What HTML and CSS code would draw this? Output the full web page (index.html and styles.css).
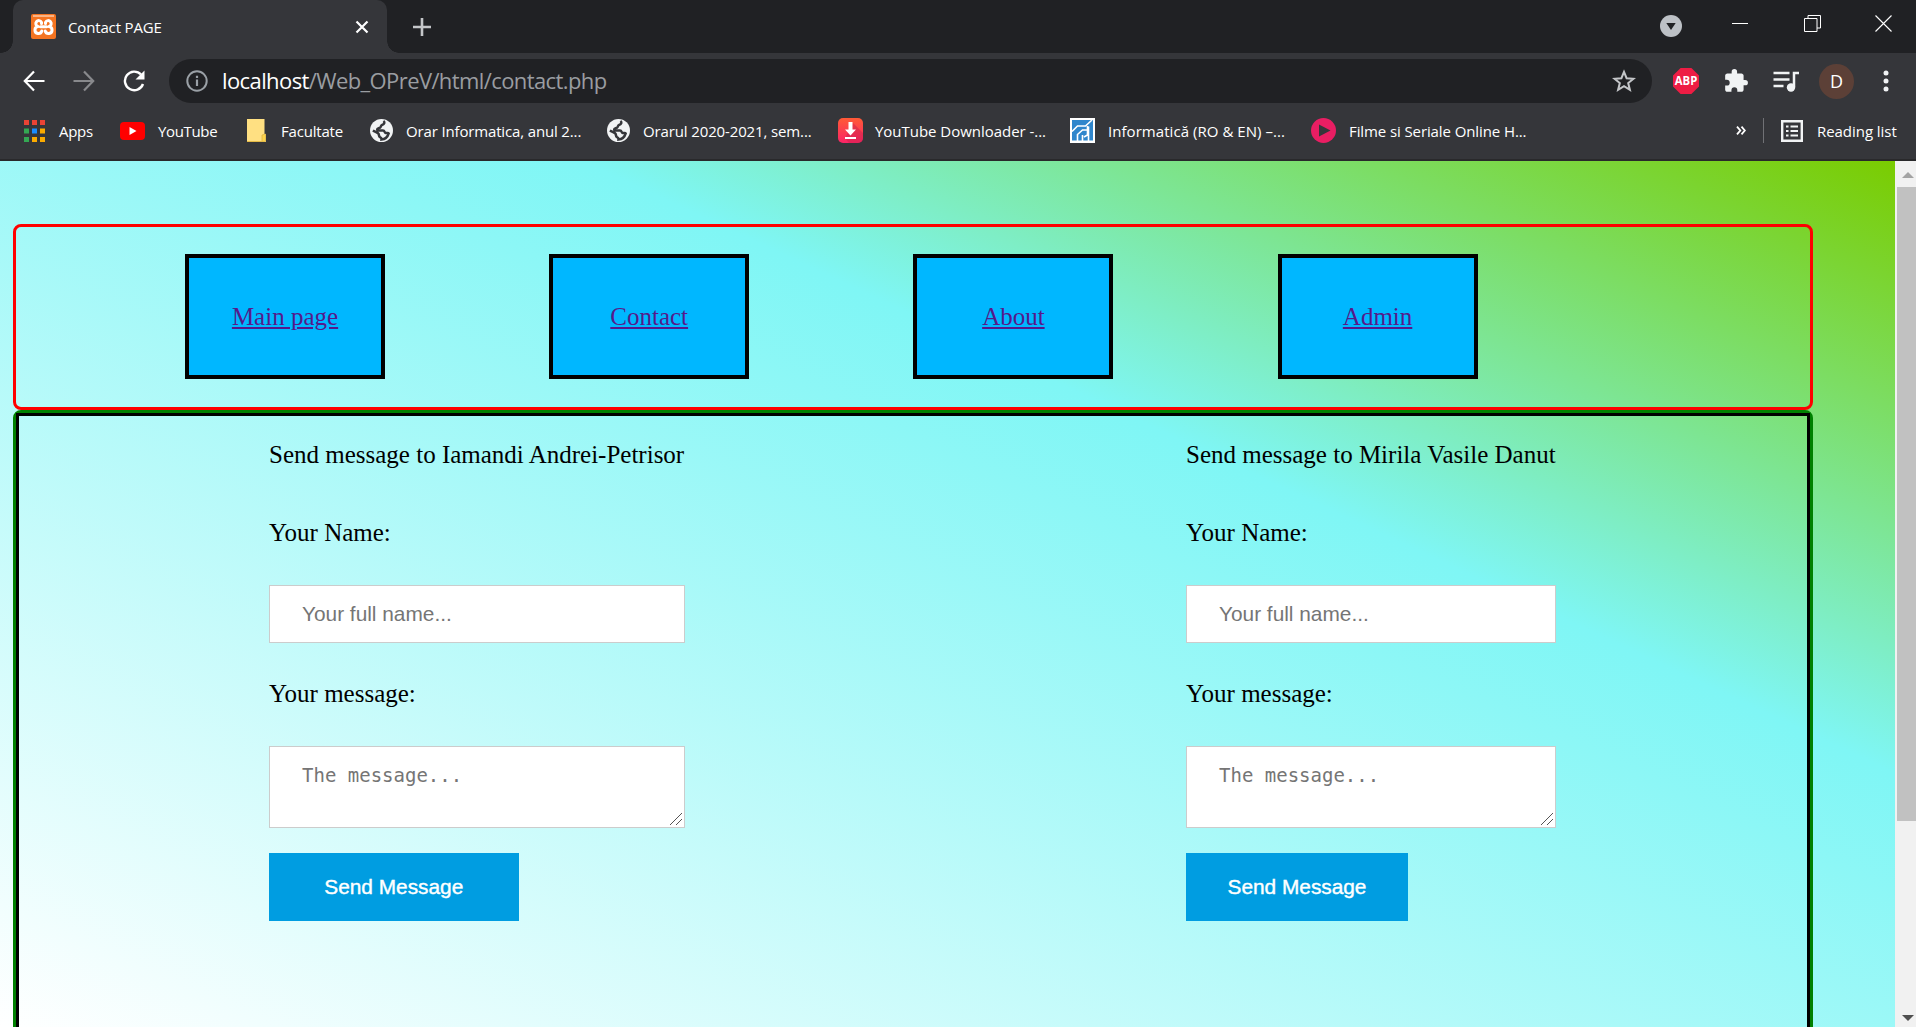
FILE: index.html
```html
<!DOCTYPE html>
<html lang="en">
<head>
<meta charset="utf-8">
<title>Contact PAGE</title>
<link rel="stylesheet" href="styles.css">
</head>
<body>
<div class="window">
  <header class="tabstrip">
    <div class="tab">
      <svg class="favicon" width="25" height="25" viewBox="0 0 25 25"><rect width="25" height="25" rx="2" fill="#f47421"/><rect x="2" y="1" width="21" height="2" fill="#f9b384"/><path d="M10.500 9.500V8.300A3 3 0 1 0 7 12.500a3.500 3.500 0 1 0 3.800 4.500M14.500 9.500V8.300a3 3 0 1 1 3.500 4.200 3.500 3.500 0 1 1-3.800 4.500M9.500 12.700h6" fill="none" stroke="#fff" stroke-width="3" stroke-linejoin="round" stroke-linecap="round"/></svg>
      <span class="tab-title">Contact PAGE</span>
      <svg class="tab-close" width="14" height="14" viewBox="0 0 14 14"><path d="M1.500 1.500l11 11M12.500 1.500l-11 11" stroke="#fff" stroke-width="2.200"/></svg>
    </div>
    <svg class="new-tab" width="20" height="20" viewBox="0 0 20 20"><path d="M10 1v18M1 10h18" stroke="#c4c6c9" stroke-width="2.600"/></svg>
    <div class="window-controls">
      <svg width="22" height="22" viewBox="0 0 22 22"><circle cx="11" cy="11" r="11" fill="#bdc1c6"/><path d="M6.300 8h9.400L11 15z" fill="#202124"/></svg>
      <svg width="16" height="16" viewBox="0 0 16 16"><path d="M0 8.500h16" stroke="#fff"/></svg>
      <svg width="17" height="17" viewBox="0 0 17 17"><path d="M.5 3.500h12.500v13H.5zM4 3.500v-3h12.500v12.500H13" fill="none" stroke="#fff"/></svg>
      <svg width="17" height="17" viewBox="0 0 17 17"><path d="M.5.5l16 16M16.500.5l-16 16" stroke="#fff" stroke-width="1.100"/></svg>
    </div>
  </header>

  <div class="toolbar">
    <svg class="nav-icon" width="22" height="22" viewBox="0 0 22 22"><path d="M21.500 11H2M11 1.500L1.800 11l9.200 9.500" fill="none" stroke="#fff" stroke-width="2.200"/></svg>
    <svg class="nav-icon" width="22" height="22" viewBox="0 0 22 22"><path d="M.5 11H20M11 1.500l9.200 9.500-9.200 9.500" fill="none" stroke="#88898c" stroke-width="2.200"/></svg>
    <svg class="nav-icon" width="22" height="22" viewBox="0 0 22 22"><path d="M20 14a9.300 9.300 0 1 1-2-9.500" fill="none" stroke="#fff" stroke-width="2.400"/><path d="M21.500.5v9h-9z" fill="#fff"/></svg>
    <div class="omnibox">
      <svg width="22" height="22" viewBox="0 0 22 22"><circle cx="11" cy="11" r="9.700" fill="none" stroke="#9aa0a6" stroke-width="2"/><path d="M11 9.500V16M11 5.800v2.200" stroke="#9aa0a6" stroke-width="2.200"/></svg>
      <span class="url"><span class="host">localhost</span><span class="path">/Web_OPreV/html/contact.php</span></span>
      <svg class="star" width="24" height="24" viewBox="0 0 24 24"><path d="M12 2.800l2.600 6.400 6.900.5-5.300 4.400 1.700 6.800-5.900-3.700-5.900 3.700 1.700-6.800L2.500 9.700l6.900-.5z" fill="none" stroke="#c4c6c9" stroke-width="2"/></svg>
    </div>
    <div class="extensions">
      <svg width="26" height="26" viewBox="0 0 26 26"><path d="M7.600 0h10.800L26 7.600v10.800L18.400 26H7.600L0 18.400V7.600z" fill="#ee1d44"/><text class="abp" x="13" y="17.200" text-anchor="middle" textLength="22.500" lengthAdjust="spacingAndGlyphs">ABP</text></svg>
      <svg width="26" height="26" viewBox="0 0 24 24"><path d="M20.500 11H19V7c0-1.100-.9-2-2-2h-4V3.500a2.500 2.500 0 0 0-5 0V5H4c-1.100 0-2 .9-2 2v3.800h1.500a2.700 2.700 0 0 1 0 5.400H2V20c0 1.100.9 2 2 2h3.800v-1.500a2.700 2.700 0 0 1 5.400 0V22H17c1.100 0 2-.9 2-2v-4h1.500a2.500 2.500 0 0 0 0-5z" fill="#f1f3f4"/></svg>
      <svg width="26" height="22" viewBox="0 0 26 22"><path d="M.5 3h16M.5 9.500h16M.5 16h10" stroke="#f1f3f4" stroke-width="2.500"/><path d="M21 17V3h5" fill="none" stroke="#f1f3f4" stroke-width="2.500"/><circle cx="18" cy="17.500" r="4.200" fill="#f1f3f4"/></svg>
      <span class="avatar">D</span>
      <svg width="6" height="22" viewBox="0 0 6 22"><circle cx="3" cy="3" r="2.500" fill="#f1f3f4"/><circle cx="3" cy="11" r="2.500" fill="#f1f3f4"/><circle cx="3" cy="19" r="2.500" fill="#f1f3f4"/></svg>
    </div>
  </div>

  <div class="bookmarks">
    <div class="bookmark apps"><svg width="21" height="22" viewBox="0 0 21 22"><path d="M0 0h5v5H0zM8 0h5v5H8zM16 0h5v5h-5z" fill="#ea4335"/><path d="M0 8.500h5v5H0zM0 17h5v5H0z" fill="#34a853"/><path d="M8 8.500h5v5H8z" fill="#1a8cff"/><path d="M16 8.500h5v5h-5zM8 17h5v5H8zM16 17h5v5h-5z" fill="#fbab00"/></svg><span>Apps</span></div>
    <div class="bookmark youtube"><svg width="25" height="18" viewBox="0 0 25 18"><rect width="25" height="18" rx="4" fill="#f00"/><path d="M9.500 5v8l7-4z" fill="#fff"/></svg><span>YouTube</span></div>
    <div class="bookmark folder"><svg width="19" height="23" viewBox="0 0 19 23"><path d="M0 0h17.500v15H19v8H0z" fill="#ffe082"/><path d="M15 16l3.500-1v7.500H15z" fill="#fdd44c" stroke="#d9b040" stroke-width=".7"/><path d="M0 22.500h15" stroke="#e5bb47"/></svg><span>Facultate</span></div>
    <div class="bookmark orar"><svg width="23" height="23" viewBox="0 0 24 24"><circle cx="12" cy="12" r="12" fill="#f1f3f4"/><path d="M14 2c2 1.500.8 3.500-1 4-2.300.7-1 2-2.500 3-1.300.8-3 .3-3 1.800 0 1.500 1 1.200 3 1.200h3c2 0 1.500 2 2.500 2.500 1.300.6 3-.2 3.500.5-1 3.500-4 6.200-7.500 6.500.2-1.500-.5-2-1.500-2.500-1.500-.8-1-2.500-1.500-3.500S5.500 13.500 3 12" fill="none" stroke="#35363a" stroke-width="2.600"/></svg><span>Orar Informatica, anul 2...</span></div>
    <div class="bookmark orarul"><svg width="23" height="23" viewBox="0 0 24 24"><circle cx="12" cy="12" r="12" fill="#f1f3f4"/><path d="M14 2c2 1.500.8 3.500-1 4-2.300.7-1 2-2.500 3-1.300.8-3 .3-3 1.800 0 1.500 1 1.200 3 1.200h3c2 0 1.500 2 2.500 2.500 1.300.6 3-.2 3.500.5-1 3.500-4 6.200-7.500 6.500.2-1.500-.5-2-1.500-2.500-1.500-.8-1-2.500-1.500-3.500S5.500 13.500 3 12" fill="none" stroke="#35363a" stroke-width="2.600"/></svg><span>Orarul 2020-2021, sem...</span></div>
    <div class="bookmark downloader"><svg width="25" height="25" viewBox="0 0 25 25"><defs><linearGradient id="dl" x1="0" y1="0" x2="0" y2="1"><stop offset="0" stop-color="#ff5a36"/><stop offset="1" stop-color="#fb2466"/></linearGradient></defs><rect width="25" height="25" rx="5" fill="url(#dl)"/><path d="M15 5l10 10v5a5 5 0 0 1-5 5h-9l-4-5z" fill="#c81f4c" opacity=".45"/><path d="M10.500 4h4v7.500h3.500l-5.500 6-5.500-6h3.500zM7 19h11v2H7z" fill="#fff"/></svg><span>YouTube Downloader -...</span></div>
    <div class="bookmark informatica"><svg width="25" height="25" viewBox="0 0 25 25"><path d="M0 0h25v25H0z" fill="#fff"/><path d="M2 2h21v20.500H2z" fill="#2f86cc"/><path d="M2 13.500l5.500-5.500h8L22 2M7.500 23v-6.500l5-4.500h5M17.500 8v9l-3.500 2M18.500 8.500V23M12.500 23v-6" fill="none" stroke="#fff" stroke-width="1.600"/></svg><span>Informatică (RO &amp; EN) –...</span></div>
    <div class="bookmark filme"><svg width="25" height="25" viewBox="0 0 25 25"><circle cx="12.500" cy="12.500" r="12.500" fill="#e91e63"/><path d="M8 6.500v12l11.500-6z" fill="#35363a"/></svg><span>Filme si Seriale Online H...</span></div>
    <div class="overflow"><svg width="10" height="9" viewBox="0 0 10 9"><path d="M1 .7l3.300 3.800L1 8.300M5.500.7l3.300 3.800-3.300 3.800" fill="none" stroke="#fff" stroke-width="1.800"/></svg></div>
    <div class="reading"><svg width="22" height="22" viewBox="0 0 22 22"><path d="M1.200 1.200h19.600v19.600H1.200z" fill="none" stroke="#f1f3f4" stroke-width="2.400"/><path d="M5 6.500h2.500M9.500 6.500H17M5 11h2.500M9.500 11H17M5 15.500h2.500M9.500 15.500H17" stroke="#f1f3f4" stroke-width="2.200"/></svg><span>Reading list</span></div>
  </div>

  <div class="viewport">
    <main class="page">
      <nav class="menu">
        <div class="menu-item"><a href="#">Main page</a></div>
        <div class="menu-item"><a href="#">Contact</a></div>
        <div class="menu-item"><a href="#">About</a></div>
        <div class="menu-item"><a href="#">Admin</a></div>
      </nav>
      <section class="panel">
        <div class="panel-inner">
          <form class="contact contact-first">
            <p class="heading">Send message to Iamandi Andrei-Petrisor</p>
            <label>Your Name:</label>
            <input type="text" placeholder="Your full name...">
            <label>Your message:</label>
            <div class="message"><textarea placeholder="The message..."></textarea><svg class="grip" width="12" height="12" viewBox="0 0 12 12"><path d="M0 12L12 0M6 12l6-6" stroke="#555"/></svg></div>
            <button type="button">Send Message</button>
          </form>
          <form class="contact contact-second">
            <p class="heading">Send message to Mirila Vasile Danut</p>
            <label>Your Name:</label>
            <input type="text" placeholder="Your full name...">
            <label>Your message:</label>
            <div class="message"><textarea placeholder="The message..."></textarea><svg class="grip" width="12" height="12" viewBox="0 0 12 12"><path d="M0 12L12 0M6 12l6-6" stroke="#555"/></svg></div>
            <button type="button">Send Message</button>
          </form>
        </div>
      </section>
    </main>
    <aside class="scrollbar">
      <svg width="12" height="6" viewBox="0 0 12 6"><path d="M0 6h12L6 0z" fill="#a3a3a3"/></svg>
      <div class="thumb"></div>
      <svg class="down" width="12" height="6" viewBox="0 0 12 6"><path d="M0 0h12L6 6z" fill="#505050"/></svg>
    </aside>
  </div>
</div>
</body>
</html>
```
FILE: styles.css
```css
* { box-sizing: border-box; }

body {
  margin: 0;
  background: #fff;
  overflow: hidden;
}

svg { display: block; flex: none; }

.window {
  width: 1916px;
  height: 1027px;
  display: flex;
  flex-direction: column;
  font-family: "Open Sans", "Noto Sans", sans-serif;
  font-size: 15px;
  color: #fff;
  background: #35363a;
  overflow: hidden;
}

/* Tab strip */
.tabstrip {
  height: 53px;
  flex: none;
  display: flex;
  padding-left: 13px;
  background: #202124;
}
.tab {
  position: relative;
  width: 374px;
  display: flex;
  align-items: center;
  padding: 0 18px;
  background: #35363a;
  border-radius: 10px 10px 0 0;
}
.tab::before, .tab::after {
  content: "";
  position: absolute;
  bottom: 0;
  width: 12px;
  height: 12px;
}
.tab::before { left: -12px; background: radial-gradient(circle at 0 0, transparent 11.5px, #35363a 12px); }
.tab::after { right: -12px; background: radial-gradient(circle at 100% 0, transparent 11.5px, #35363a 12px); }
.tab-title { margin-left: 12px; letter-spacing: -0.15px; }
.tab-close { margin-left: auto; }
.new-tab { margin: 17px 0 0 25px; }
.window-controls {
  margin-left: auto;
  display: grid;
  grid-template-columns: 72px 72px 71px 41px;
  width: 256px;
  padding-top: 15px;
  align-items: start;
}

/* Toolbar */
.toolbar {
  height: 56px;
  flex: none;
  display: flex;
  align-items: center;
  padding-left: 23px;
}
.nav-icon { margin-right: 28px; }
.omnibox {
  width: 1483px;
  height: 44px;
  margin-left: -4px;
  border-radius: 22px;
  background: #202124;
  display: flex;
  align-items: center;
  padding: 0 16px 0 17px;
}
.url {
  margin: 0 0 2px 14px;
  font-size: 22px;
  white-space: nowrap;
  letter-spacing: -0.6px;
}
.path { color: #9a9da1; }
.star { margin-left: auto; }
.extensions { display: flex; align-items: center; margin-left: 21px; }
.extensions > :nth-child(2) { margin-left: 24px; }
.extensions > :nth-child(3) { margin-left: 24px; }
.extensions > :nth-child(5) { margin-left: 29px; }
.abp { font: bold 12px "Open Sans", sans-serif; fill: #fff; }
.avatar {
  width: 35px;
  height: 35px;
  margin-left: 20px;
  border-radius: 50%;
  background: #5c4037;
  font-size: 18px;
  line-height: 35px;
  text-align: center;
}

/* Bookmarks bar */
.bookmarks {
  height: 52px;
  flex: none;
  display: flex;
  align-items: center;
  padding: 0 0 7px 24px;
  border-bottom: 2px solid #29292b;
  white-space: nowrap;
}
.bookmark { display: flex; align-items: center; flex: none; }
.apps { width: 96px; gap: 14px; letter-spacing: -0.3px; }
.youtube { width: 127px; gap: 13px; letter-spacing: -0.35px; }
.folder { width: 123px; gap: 15px; letter-spacing: -0.2px; }
.orar { width: 237px; gap: 13px; letter-spacing: -0.15px; }
.orarul { width: 231px; gap: 13px; letter-spacing: -0.13px; }
.downloader { width: 232px; gap: 12px; letter-spacing: -0.03px; }
.informatica { width: 241px; gap: 13px; letter-spacing: 0.05px; }
.filme { gap: 13px; letter-spacing: -0.1px; }
.overflow { margin-left: auto; margin-right: 17px; }
.reading {
  display: flex;
  align-items: center;
  gap: 14px;
  width: 153px;
  height: 25px;
  padding-left: 17px;
  border-left: 1px solid #707175;
  letter-spacing: -0.05px;
}

/* Web page */
.viewport { flex: 1; display: flex; min-height: 0; }
.page {
  width: 1895px;
  padding: 63px 82px 0 13px;
  background: linear-gradient(25deg, #fff 0%, #7ff6f5 65%, #7acc00 100%);
  font-family: "Liberation Serif", serif;
  font-size: 25px;
  line-height: 29px;
  color: #000;
  overflow: hidden;
}
.menu {
  height: 186px;
  border: 3px solid #f00;
  border-radius: 8px;
  padding: 27px 0 0 169px;
  display: flex;
  gap: 164.2px;
}
.menu-item {
  width: 200px;
  height: 125px;
  flex: none;
  border: 4px solid #000;
  background: #00b7ff;
  display: flex;
  align-items: center;
  justify-content: center;
}
.menu-item a { color: #551a8b; }
.panel {
  height: 900px;
  border: 3px solid #008000;
  border-radius: 8px;
}
.panel-inner {
  height: 100%;
  border: 3px solid #000;
  padding: 24px 0 0 250px;
  display: flex;
  align-items: flex-start;
  gap: 501px;
}
.contact { display: flex; flex-direction: column; }
.contact-first { width: 416px; }
.contact-second { width: 370px; }
.heading { margin: 0 0 49px; white-space: nowrap; }
.contact label { margin-bottom: 38px; }
.contact input, .contact textarea {
  width: 100%;
  border: 1px solid #ccc;
  border-radius: 0;
  background: #fff;
  outline: none;
}
.contact input {
  height: 58px;
  margin: 0 0 36px;
  padding: 0 32px;
  font: 20.83px "Liberation Sans", sans-serif;
}
.contact ::placeholder { color: #757575; opacity: 1; }
.message { position: relative; height: 82px; margin-bottom: 25px; }
.contact textarea {
  display: block;
  height: 82px;
  padding: 16px 32px;
  resize: none;
  overflow: hidden;
  font: 19px/24px "DejaVu Sans Mono", monospace;
}
.grip { position: absolute; right: 3px; bottom: 3px; }
.contact button {
  width: 60%;
  height: 68px;
  padding: 0;
  border: 0;
  background: #009de1;
  color: #fff;
  font: 20.83px "Liberation Sans", sans-serif;
  -webkit-text-stroke: 0.4px #fff;
}

/* Scrollbar */
.scrollbar {
  width: 21px;
  background: #f1f1f1;
  display: flex;
  flex-direction: column;
  align-items: center;
  padding: 11px 0 6px;
}
.scrollbar svg { margin-left: 4px; }
.thumb { width: 19px; height: 634px; margin: 9px 0 0 2px; background: #c1c1c1; }
.down { margin-top: auto; }
```
